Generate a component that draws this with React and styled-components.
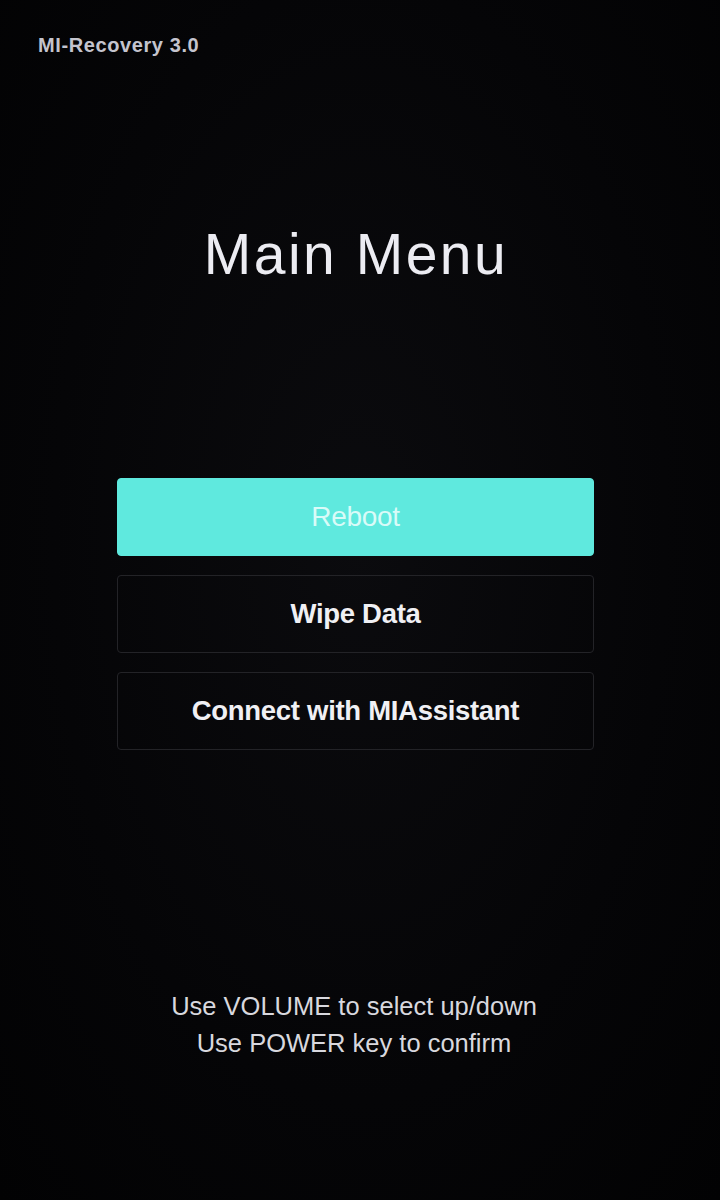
import React from 'react'
import styled, { createGlobalStyle } from 'styled-components';

const GlobalStyle = createGlobalStyle`
    html, body {
        margin: 0;
        padding: 0;
        background: #040406;
    }
    * { box-sizing: border-box; }
`;

const menuItems = [
    { text: 'Reboot', selected: true },
    { text: 'Wipe Data' },
    { text: 'Connect with MIAssistant' },
];

const App = () => {
    return (
        <>
            <GlobalStyle />
            <Screen>
                <Version>MI-Recovery 3.0</Version>
                <Title>Main Menu</Title>
                <Menu>
                    {
                        menuItems.map(item => (
                            <MenuItem key={item.text} selected={item.selected}>{item.text}</MenuItem>
                        ))
                    }
                </Menu>
                <Hint>
                    <p>Use VOLUME to select up/down</p>
                    <p>Use POWER key to confirm</p>
                </Hint>
            </Screen>
        </>
    )
}

export default App;

const Screen = styled.div`
    width: 720px;
    height: 1200px;
    background: radial-gradient(ellipse at 50% 45%, #0b0b0e 0%, #050507 60%, #020203 100%);
    font-family: "Liberation Sans", Arial, sans-serif;
    display: flex;
    flex-direction: column;
    padding: 34px 0 0 0;
    overflow: hidden;
`;

const Version = styled.div`
    color: #c4c4ce;
    font-size: 20px;
    font-weight: bold;
    padding-left: 38px;
    line-height: 22px;
    letter-spacing: 0.6px;
`;

const Title = styled.h1`
    margin: 166px 0 0 0;
    padding-right: 8px;
    color: #ececf2;
    font-size: 57px;
    font-weight: normal;
    letter-spacing: 2.5px;
    text-align: center;
    line-height: 64px;
`;

const Menu = styled.div`
    margin: 192px 0 0 117px;
    width: 477px;
    display: flex;
    flex-direction: column;
    gap: 19px;
`;

const MenuItem = styled.div`
    height: 78px;
    border-radius: 4px;
    border: 1px solid ${p => p.selected ? '#5fe9de' : '#232327'};
    background: ${p => p.selected ? '#5fe9de' : 'transparent'};
    color: ${p => p.selected ? '#d9fbf8' : '#f0f0f4'};
    font-size: ${p => p.selected ? '28px' : '27.5px'};
    font-weight: ${p => p.selected ? 'normal' : 'bold'};
    display: flex;
    align-items: center;
    justify-content: center;
    letter-spacing: -0.3px;
`;

const Hint = styled.div`
    margin-top: 238px;
    padding-right: 12px;
    text-align: center;
    color: #d8d8de;
    font-size: 25.5px;

    p{
        margin: 0;
        line-height: 37px;
    }
`;
